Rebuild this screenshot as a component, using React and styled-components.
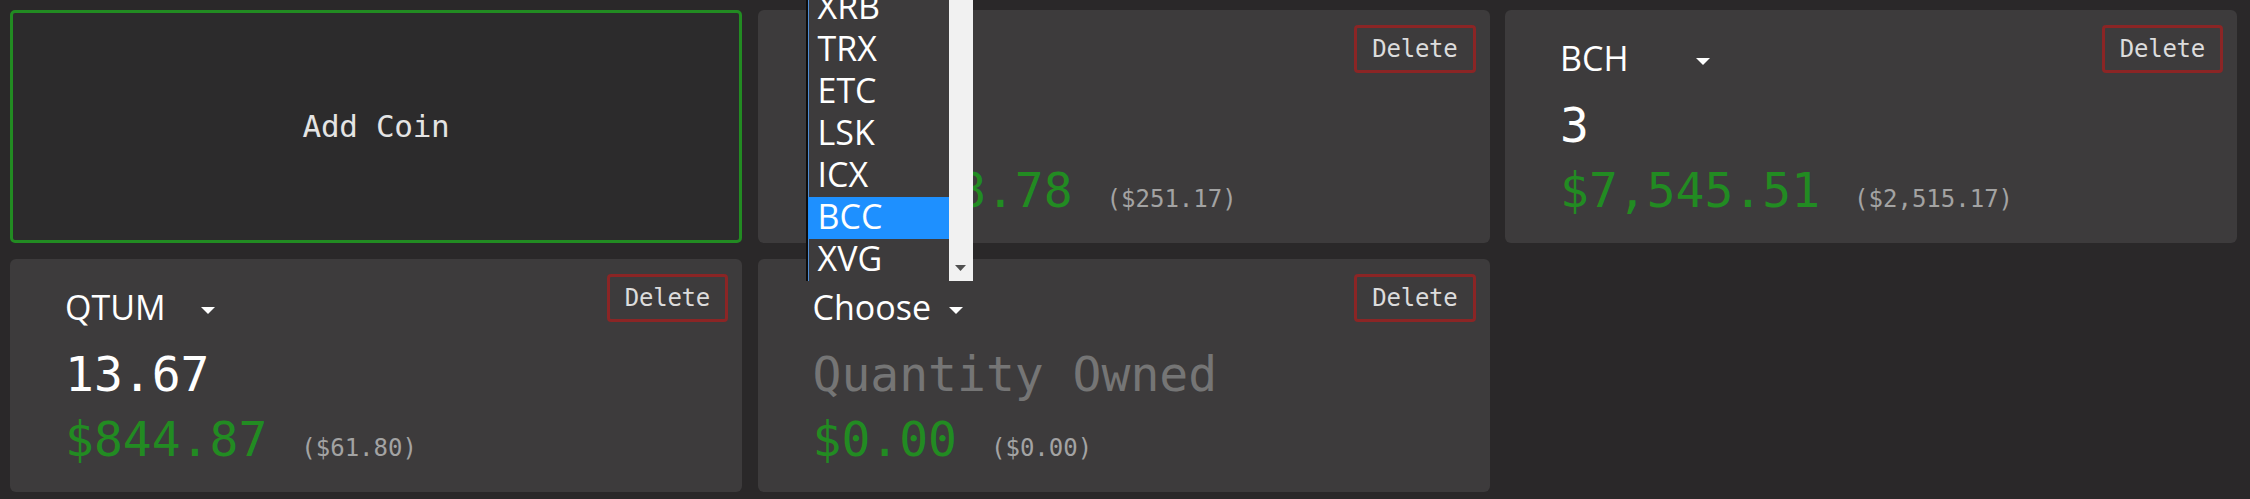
import React from "react"
import styled, { createGlobalStyle } from "styled-components"

const GlobalStyle = createGlobalStyle`
html, body {
  margin: 0;
  background: #2a2829;
}
body {
  font-family: "DejaVu Sans Mono", monospace;
  color: #fff;
}
`

const Grid = styled.div`
display: grid;
grid-template-columns: repeat(3, 1fr);
grid-auto-rows: 233px;
gap: 16px 15.5px;
padding: 9.5px 13px 8px 10px;
`

const AddCoin = styled.button`
display: flex;
align-items: center;
justify-content: center;
background: #2c2b2c;
border: 3px solid #228b22;
border-radius: 5px;
color: #e4e4e4;
font-family: "DejaVu Sans Mono", monospace;
font-size: 31px;
letter-spacing: -0.3px;
cursor: pointer;
`

const Card = styled.div`
background: #3d3b3c;
border-radius: 6px;
padding: 15px 14px 0 55px;
`

const Header = styled.div`
display: flex;
justify-content: space-between;
align-items: flex-start;
`

const Select = styled.div`
position: relative;
display: flex;
align-items: center;
justify-content: space-between;
width: 150px;
height: 42px;
margin-top: 12px;
font-family: "Open Sans", sans-serif;
font-size: 34px;
line-height: 42px;
color: #fff;
`

const Caret = styled.svg`
display: block;
margin-top: 7.5px;
`

const Delete = styled.button`
background: transparent;
border: 3px solid #8b2525;
border-radius: 4px;
padding: 7px 15px;
color: #dcdcdc;
font-family: "DejaVu Sans Mono", monospace;
font-size: 24px;
line-height: 28px;
letter-spacing: -0.25px;
cursor: pointer;
`

const Quantity = styled.div`
margin-top: 14px;
font-size: 48px;
line-height: 65px;
color: ${p => (p.$empty ? "#757575" : "#fff")};
`

const Worth = styled.div`
display: flex;
align-items: baseline;
line-height: 65px;
`

const Value = styled.span`
font-size: 48px;
color: #228b22;
`

const Price = styled.span`
margin-left: 34px;
font-size: 24px;
color: #a3a3a3;
`

const Menu = styled.div`
position: absolute;
left: -7px;
bottom: calc(100% + 4.5px);
z-index: 10;
display: flex;
width: 167px;
background: #3d3b3c;
border-left: 2px solid #0d0d0d;
box-sizing: border-box;
`

const Options = styled.ul`
flex: 1;
list-style: none;
margin: 0;
padding: 0;
box-shadow: inset 1px 0 #4f8fd8;
`

const Option = styled.li`
height: 42px;
box-sizing: border-box;
padding-left: 10px;
line-height: 38px;
background: ${p => (p.$active ? "#1e90ff" : "transparent")};
`

const Scrollbar = styled.div`
width: 24px;
background: #f1f1f1;
display: flex;
flex-direction: column;
justify-content: flex-end;
align-items: center;
padding-bottom: 10px;
box-sizing: border-box;
`

const symbols = [
  "Choose", "BTC", "ETH", "XRP", "LTC", "ADA", "XLM", "NEO", "EOS", "MIOTA",
  "DASH", "XMR", "XEM", "VEN", "QTUM", "XRB", "TRX", "ETC", "LSK", "ICX", "BCC", "XVG",
]

const coins = [
  { id: 1, symbol: "LTC", quantity: "16", value: "$4,018.78", price: "($251.17)" },
  { id: 2, symbol: "BCH", quantity: "3", value: "$7,545.51", price: "($2,515.17)" },
  { id: 3, symbol: "QTUM", quantity: "13.67", value: "$844.87", price: "($61.80)" },
  { id: 4, symbol: null, quantity: "", value: "$0.00", price: "($0.00)", open: true },
]

const CaretIcon = () => (
  <Caret width="14" height="7" viewBox="0 0 14 7">
    <path d="M0 0h14L7 7z" fill="#fff" />
  </Caret>
)

const CoinCard = ({ coin }) => (
  <Card>
    <Header>
      <Select>
        <span>{coin.symbol || "Choose"}</span>
        <CaretIcon />
        {coin.open && (
          <Menu>
            <Options>
              {symbols.map(s => (
                <Option key={s} $active={s === "BCC"}>{s}</Option>
              ))}
            </Options>
            <Scrollbar>
              <svg width="11" height="6" viewBox="0 0 11 6">
                <path d="M0 0h11L5.5 6z" fill="#505050" />
              </svg>
            </Scrollbar>
          </Menu>
        )}
      </Select>
      <Delete>Delete</Delete>
    </Header>
    <Quantity $empty={!coin.quantity}>{coin.quantity || "Quantity Owned"}</Quantity>
    <Worth>
      <Value>{coin.value}</Value>
      <Price>{coin.price}</Price>
    </Worth>
  </Card>
)

export default function App() {
  return (
    <>
      <GlobalStyle />
      <Grid>
        <AddCoin>Add Coin</AddCoin>
        {coins.map(c => (
          <CoinCard key={c.id} coin={c} />
        ))}
      </Grid>
    </>
  )
}
